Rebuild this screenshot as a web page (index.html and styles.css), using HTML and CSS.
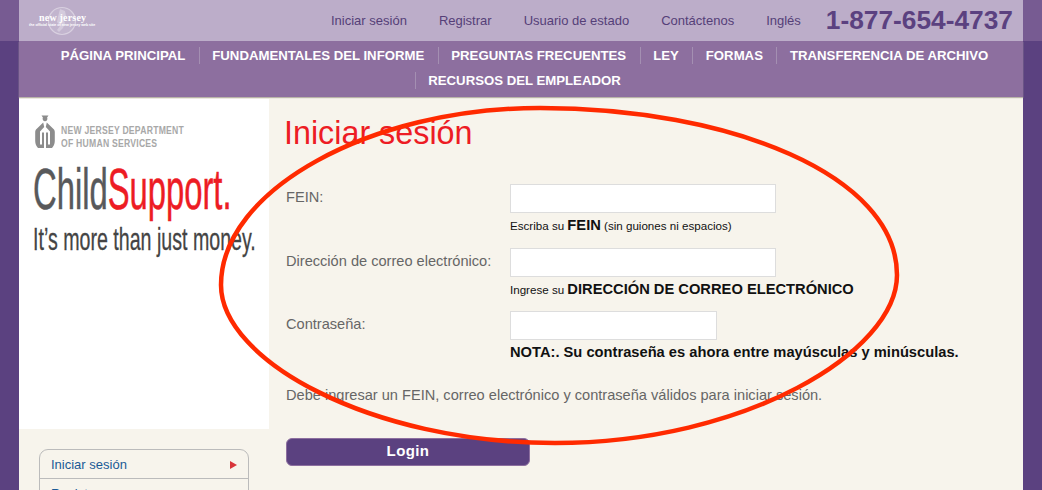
FILE: index.html
```html
<!DOCTYPE html>
<html lang="es">
<head>
<meta charset="utf-8">
<title>Iniciar sesión</title>
<link rel="stylesheet" href="styles.css">
</head>
<body>
<header class="topband">
  <div class="topband-inner">
    <a class="nj-logo" href="#">
      <svg class="nj-mark" width="30" height="30" viewBox="0 0 30 30" aria-hidden="true">
        <circle cx="15" cy="15" r="13.5" fill="#fff" fill-opacity=".1" stroke="#fff" stroke-opacity=".4" stroke-width="1.2"/>
        <path d="M13 3l5 2 1 5-3 3 2 4-2 5-4 4-2-2 3-4-3-4 1-5z" fill="#fff" fill-opacity=".3"/>
      </svg>
      <span class="nj-name">new jersey</span>
      <span class="nj-tag">the official state of new jersey web site</span>
    </a>
    <nav class="utility">
      <a href="#">Iniciar sesión</a>
      <a href="#">Registrar</a>
      <a href="#">Usuario de estado</a>
      <a href="#">Contáctenos</a>
      <a href="#">Inglés</a>
    </nav>
    <div class="phone">1-877-654-4737</div>
  </div>
</header>
<nav class="mainnav">
  <a href="#">PÁGINA PRINCIPAL</a>
  <a href="#">FUNDAMENTALES DEL INFORME</a>
  <a href="#">PREGUNTAS FRECUENTES</a>
  <a href="#">LEY</a>
  <a href="#">FORMAS</a>
  <a href="#">TRANSFERENCIA DE ARCHIVO</a>
  <a href="#">RECURSOS DEL EMPLEADOR</a>
</nav>
<main class="layout">
  <aside class="sidebar">
    <div class="brand">
      <div class="dept">
        <svg width="20" height="34" viewBox="0 0 20 34" aria-hidden="true">
          <g fill="#8c8c8c">
            <path d="M6.5 .5h7l-1.4 2.1a2.4 2.4 0 1 1-4.2 0z"/>
            <path d="M8.2 7.5 1 14.5C.4 15.2.2 16 .2 17v9c0 3 1.2 5.200 2.800 7H9V17.500H7V29.500H5V16.500L9.200 12z"/>
            <path d="M11.800 7.500 19 14.500c.6.700.8 1.500.8 2.500v9c0 3-1.200 5.200-2.800 7H11V17.500h2V29.500h2V16.500L10.800 12z"/>
          </g>
        </svg>
        <div class="dept-name"><span>NEW JERSEY DEPARTMENT</span><span>OF HUMAN SERVICES</span></div>
      </div>
      <div class="cs-title"><span class="cs-child">Child</span><span class="cs-support">Support.</span></div>
      <div class="cs-tagline">It’s more than just money.</div>
    </div>
    <ul class="sidemenu">
      <li><a href="#">Iniciar sesión</a></li>
      <li><a href="#">Registrar</a></li>
    </ul>
  </aside>
  <section class="content">
    <h1>Iniciar sesión</h1>
    <form class="form">
      <div class="field">
        <label for="fein">FEIN:</label>
        <div class="control">
          <input id="fein" type="text">
          <p class="hint">Escriba su <strong>FEIN</strong> (sin guiones ni espacios)</p>
        </div>
      </div>
      <div class="field">
        <label for="mail">Dirección de correo electrónico:</label>
        <div class="control">
          <input id="mail" type="text">
          <p class="hint hint-tight">Ingrese su <strong>DIRECCIÓN DE CORREO ELECTRÓNICO</strong></p>
        </div>
      </div>
      <div class="field">
        <label for="pass">Contraseña:</label>
        <div class="control">
          <input id="pass" class="short" type="password">
          <p class="hint hint-last"><strong>NOTA:. Su contraseña es ahora entre mayúsculas y minúsculas.</strong></p>
        </div>
      </div>
      <p class="notice">Debe ingresar un FEIN, correo electrónico y contraseña válidos para iniciar sesión.</p>
      <button class="login" type="button">Login</button>
    </form>
  </section>
</main>
<svg class="scribble" width="1042" height="490" viewBox="0 0 1042 490" aria-hidden="true">
  <path d="M221 285C221 190 370 108 540 108C730 108 897 175 897 275C897 352 745 443 555 443C370 443 221 360 221 285Z" fill="none" stroke="#ff2a00" stroke-width="4.5"/>
</svg>
</body>
</html>
```
FILE: styles.css
```css
* { box-sizing: border-box; }
html, body { margin: 0; height: 490px; overflow: hidden; }
body {
  position: relative;
  background: #5b4180;
  font-family: "Liberation Sans", Arial, sans-serif;
  color: #666;
}
a { color: inherit; text-decoration: none; }

.topband { background: #775b92; height: 41px; }
.topband-inner {
  margin: 0 19px;
  height: 41px;
  background: #bcadc9;
  display: flex;
  align-items: center;
  padding-right: 10px;
}
.nj-logo {
  position: relative;
  display: block;
  width: 80px;
  height: 41px;
  margin-left: 9px;
  color: #fff;
}
.nj-mark { position: absolute; left: 19px; top: 6px; }
.nj-name {
  position: absolute;
  left: 11px;
  top: 12px;
  font: bold 10px "Liberation Serif", serif;
  letter-spacing: .2px;
  white-space: nowrap;
}
.nj-tag {
  position: absolute;
  left: 1px;
  top: 23px;
  font-size: 3.6px;
  font-weight: bold;
  white-space: nowrap;
}
.utility {
  margin-left: auto;
  display: flex;
  gap: 32px;
  font-size: 13px;
  color: #553f78;
}
.phone {
  margin-left: 25px;
  font-size: 26.3px;
  font-weight: bold;
  color: #5b4180;
  white-space: nowrap;
}

.mainnav {
  margin: 0 19px;
  height: 56px;
  padding: 2px 0 0 7px;
  background: #8d6f9f;
  box-shadow: 0 1px 1px #b9b4a8;
  display: flex;
  flex-wrap: wrap;
  justify-content: center;
  align-content: flex-start;
  color: #fff;
  font-size: 13.2px;
  font-weight: bold;
  position: relative;
}
.mainnav a {
  height: 25px;
  line-height: 25px;
  padding: 0 13.500px;
  position: relative;
  white-space: nowrap;
}
.mainnav a + a::before {
  content: "";
  position: absolute;
  left: 0;
  top: 4px;
  height: 17px;
  width: 1px;
  background: #a48fb2;
}

.layout {
  margin: 0 19px;
  padding-top: 2px;
  background: #f7f4ec;
  display: flex;
  height: 393px;
  overflow: hidden;
}
.sidebar { width: 250px; flex: none; }
.brand {
  background: #fff;
  height: 330px;
  padding: 16px 0 0 14px;
}
.dept { display: flex; gap: 6px; margin-left: 2px; }
.dept-name {
  display: flex;
  flex-direction: column;
  padding-top: 9px;
  color: #a8a8a8;
  font-size: 10.5px;
  font-weight: bold;
  line-height: 13px;
  white-space: nowrap;
}
.dept-name span { transform: scaleX(.82); transform-origin: 0 50%; letter-spacing: .3px; }
.cs-title {
  margin-top: 10px;
  font-size: 58px;
  line-height: 58px;
  white-space: nowrap;
  transform: scaleX(.565);
  transform-origin: 0 50%;
  -webkit-text-stroke: .5px;
}
.cs-child { color: #58595b; }
.cs-support { color: #ed1c24; }
.cs-tagline {
  font-size: 32px;
  line-height: 34px;
  margin-top: 4px;
  color: #444;
  white-space: nowrap;
  transform: scaleX(.613);
  transform-origin: 0 50%;
  -webkit-text-stroke: .3px;
}
.sidemenu {
  list-style: none;
  margin: 20px 20px 0;
  padding: 0;
  border: 1px solid #bbb;
  border-radius: 9px;
  font-size: 13px;
  color: #1a5a96;
}
.sidemenu li { height: 28px; line-height: 29px; padding-left: 11px; position: relative; }
.sidemenu li + li { border-top: 1px solid #bbb; }
.sidemenu li::after {
  content: "";
  position: absolute;
  right: 11px;
  top: 11px;
  border-left: 7px solid #d8343a;
  border-top: 4px solid transparent;
  border-bottom: 4px solid transparent;
}

.content { flex: 1; padding-left: 15px; }
h1 {
  margin: 15px 0 0;
  font-size: 32.300px;
  line-height: 38px;
  font-weight: normal;
  color: #ed1c24;
}
.form { margin-top: 32px; padding-left: 2px; }
.field { display: flex; }
.field label { width: 224px; flex: none; font-size: 14.600px; line-height: 27px; }
.control input {
  display: block;
  width: 266px;
  height: 29px;
  border: 1px solid #ddd;
  background: #fff;
  padding: 0;
}
.control input.short { width: 207px; }
.hint {
  margin: 3px 0 0;
  height: 32px;
  font-size: 11.600px;
  line-height: 18px;
  color: #111;
  white-space: nowrap;
}
.hint-tight { height: 31px; }
.hint-last { height: auto; }
.hint strong { font-size: 14.700px; }
.notice { margin: 24px 0 0; font-size: 14.600px; line-height: 18px; }
.login {
  display: block;
  margin-top: 34px;
  width: 244px;
  height: 28px;
  border: 1px solid #8d6f9f;
  border-radius: 6px;
  background: #5b4180;
  color: #fff;
  font: bold 15px "Liberation Sans", Arial, sans-serif;
  letter-spacing: .4px;
  padding: 0 0 3px;
}

.scribble { position: absolute; left: 0; top: 0; pointer-events: none; }
```
